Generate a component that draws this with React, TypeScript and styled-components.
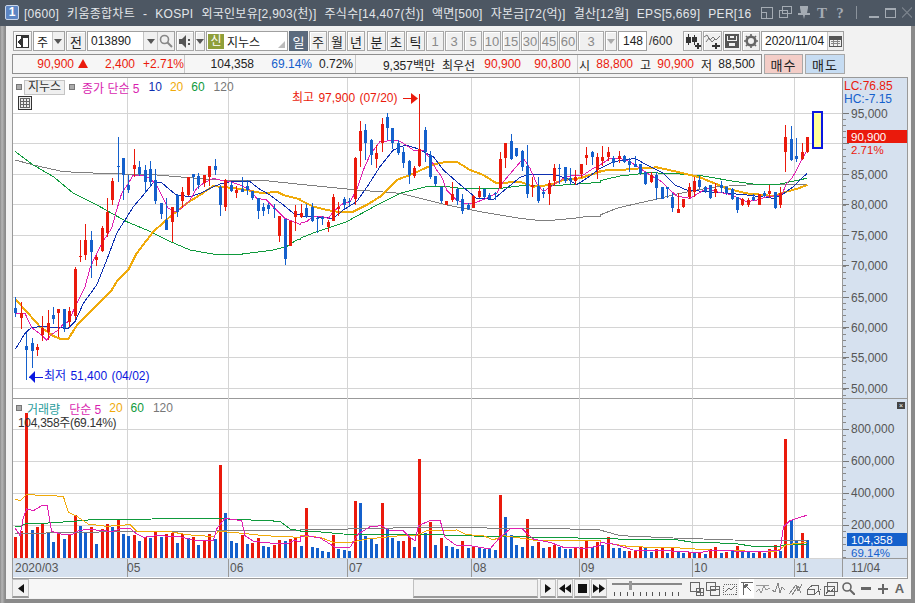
import styled, { createGlobalStyle } from "styled-components";

const FONT = `"Liberation Sans", "Noto Sans CJK KR", sans-serif`;
const RED = "#ea1a0c";
const BLUE = "#1460cc";
const AXIS_BG = "#d6e1ef";

const GlobalStyle = createGlobalStyle`
  html, body { margin: 0; padding: 0; background: #8f8f8f; }
  * { box-sizing: border-box; }
  body { font: 12px ${FONT}; color: #222; }
`;

// candles are read off in px of the enlarged crops: colour, high, top, bottom, low
type Candle = [string, number, number, number, number];
const C_A: Candle[] = [
  ["b",590,625,640,652],["r",605,640,655,687],["b",700,738,750,840],["b",715,730,752,803],["r",733,740,750,768],
  ["r",648,683,706,722],["r",630,670,695,720],["b",620,645,657,672],["r",628,628,640,712],["b",628,628,685,697],
  ["r",622,633,665,680],["r",500,507,648,658],["r",420,467,471,485],["r",372,420,465,480],["b",392,420,456,533],
  ["r",465,470,480,497],["r",378,384,452,455],["r",295,335,400,410],["r",235,243,300,315],["b",110,198,201,245],
  ["b",174,174,224,300],["b",225,255,270,280],["r",148,195,207,230],["b",183,200,222,228],["b",195,210,245,280],
  ["b",183,207,246,260],["b",207,240,303,312],["b",310,310,342,357],["b",295,360,390,390],["r",320,320,366,425],
  ["b",283,285,335,352],["r",262,277,303,325],["r",230,232,285,287],["b",222,222,230,272],["b",220,228,256,267],
  ["r",225,225,248,262],["r",198,198,232,258],["b",177,198,210,225],["b",255,262,316,348],["r",238,240,320,332],
  ["b",245,255,273,275],["r",258,270,278,293],["b",232,267,275,276],["b",240,258,270,285],["b",272,272,295,300],
  ["b",295,295,332,356],["b",308,321,332,348],["b",310,314,327,342],["b",312,323,328,355],["r",347,347,407,425],
  ["b",357,357,477,495],["r",362,364,437,437],["r",315,333,350,392],
];
const C_B: Candle[] = [
  ["r",342,370,382,385],["b",342,355,380,385],["b",340,352,392,395],["b",378,385,387,428],["b",377,380,386,405],
  ["r",390,395,412,425],["r",312,322,392,392],["r",335,352,357,378],["b",320,327,345,358],["b",325,333,337,352],
  ["r",200,204,328,345],["r",93,123,183,230],["b",102,120,160,210],["b",148,150,195,225],["r",165,189,208,235],
  ["r",85,101,158,186],["b",70,82,113,150],["b",113,114,160,177],["b",150,160,190,195],["b",170,187,220,235],
  ["b",210,212,255,282],["r",228,233,257,263],["r",12,177,227,230],["b",112,120,185,215],["b",183,195,262,268],
  ["b",258,258,282,288],["b",292,292,332,338],["r",332,332,345,345],["r",275,313,330,335],["b",295,297,332,345],
  ["b",312,327,362,372],["b",340,345,357,360],["r",315,318,355,355],["r",288,302,322,325],["b",296,296,322,325],
  ["b",310,315,327,328],["b",305,308,312,330],["r",187,207,295,298],["r",158,160,205,233],["b",132,153,208,210],
  ["b",175,175,198,200],["b",180,183,230,243],["b",165,228,312,325],["r",260,285,290,320],["b",262,288,333,340],
  ["b",295,305,312,325],["r",270,280,312,345],["r",222,235,272,288],["b",222,235,237,282],["b",232,232,272,278],
  ["b",235,265,272,285],["r",240,262,272,285],["r",222,222,252,265],["r",170,195,205,225],["b",182,185,200,225],
  ["r",190,200,240,268],
  ["r",168,202,212,228],["r",170,185,200,212],["b",198,203,218,230],["r",183,197,208,218],["b",195,197,215,218],
  ["b",205,213,226,245],["b",197,222,230,230],["b",222,222,250,255],["b",245,245,282,285],["r",245,255,277,280],
  ["b",245,255,295,330],["b",290,290,327,328],["b",290,290,298,325],["b",310,320,355,365],["r",310,358,368,370],
  ["r",328,328,352,355],["r",278,290,320,328],["r",262,273,305,320],["b",258,270,290,298],["b",288,290,303,308],
  ["b",285,285,325,328],["r",280,297,310,320],["b",272,285,295,310],["b",290,290,310,315],["b",295,297,328,330],
  ["b",320,320,360,368],["r",323,327,345,348],["r",325,330,345,350],["b",312,322,330,332],["r",312,312,345,345],
  ["b",302,308,317,320],["r",285,302,312,325],["b",305,307,355,358],["r",292,308,345,355],["r",105,140,187,245],
  ["b",108,147,210,212],["b",145,198,207,215],["r",160,185,207,210],["r",142,142,185,190],
];
const candles = [
  ...C_A.map(c => ({ c: c[0], v: c.slice(1).map(n => 100 + (n as number) / 3) })),
  ...C_B.map(c => ({ c: c[0], v: c.slice(1).map(n => 90 + (n as number) / 3) })),
];

const VOL = "r428 r412 r58 b408 r399 r389 b417 b444 r420 b435 r420 r363 b396 b417 r399 b450 r405 r390 b399 r378 b420 b426 r423 b441 r429 b432 r411 b430 r420 r417 b447 r420 b432 r429 b453 r440 r420 b435 r213 b357 b441 b447 r423 b450 r447 r432 b456 b459 r453 r438 b441 r435 r432 b456 r342 b459 b462 b471 b474 r423 b465 b468 b471 r321 b327 b426 b435 b450 r327 b405 b432 b441 r441 r429 b459 r195 b417 r384 b453 r432 b456 b459 b465 r441 b462 r456 b459 b465 b462 b468 r303 b369 b423 b453 b459 r375 b456 r444 b462 r459 r453 b459 b465 b465 r462 r459 r438 b459 r444 b453 r429 b462 b462 b471 r471 r468 r459 b462 b474 r465 r462 b477 r462 b474 b477 r474 b477 r474 b480 r465 r459 b477 r474 b471 r456 b471 b474 b477 r474 b477 r465 r453 b471 r135 b378 b441 r417 b438"
  .split(" ")
  .map(s => ({ c: s[0], top: 395 + Number(s.slice(1)) / 3 }));

const barX = (i: number) => Math.round(15.4 + 5.385 * i);
const tint = (c: string) => (c === "r" ? RED : BLUE);

const toPts = (d: number[], ox: number, oy: number) => {
  const out: string[] = [];
  for (let i = 0; i < d.length; i += 2) out.push(`${ox + d[i] / 3},${oy + d[i + 1] / 3}`);
  return out.join(" ");
};
const priceLine = (a: number[], b: number[], c: number[]) =>
  [toPts(a, 0, 100), toPts(b, 300, 90), toPts(c, 600, 90)].join(" ");
const volLine = (a: number[], b: number[], c: number[]) =>
  [toPts(a, 0, 395), toPts(b, 300, 395), toPts(c, 600, 395)].join(" ");

const PRICE_LINES = [
  { color: "#7f7f7f", w: 1, pts: priceLine(
    [46,180,100,195,190,215,300,220,470,225,590,235,660,240,780,240,900,253],
    [0,283,70,290,170,300,300,310,440,345,540,365,660,385,730,393,820,385,870,378,900,380],
    [0,375,50,355,100,343,180,325,230,312,290,300,350,290,440,285,622,283]) },
  { color: "#0f9a3c", w: 1, pts: priceLine(
    [46,155,100,195,160,230,220,280,300,320,380,365,440,390,500,420,570,450,655,465,720,463,820,450,860,440,890,420,900,418],
    [0,445,50,425,140,395,240,340,300,310,380,290,440,290,500,297,600,295,680,285,790,285,900,277],
    [0,272,60,258,150,248,240,252,310,258,390,272,460,282,540,282,620,265]) },
  { color: "#f0aa0a", w: 2, pts: priceLine(
    [46,598,80,635,120,680,160,708,180,716,205,716,235,670,280,625,335,570,350,545,385,510,410,460,460,395,510,350,560,310,600,285,640,258,680,262,730,268,790,280,830,275,850,285,900,298],
    [0,330,40,350,80,360,110,365,160,365,200,345,240,320,290,270,330,255,390,228,420,218,470,215,510,240,550,255,590,280,660,275,700,290,750,285,790,270,840,265,900,245],
    [0,242,60,240,120,235,170,232,230,245,300,262,380,295,440,310,520,318,560,305,595,295,622,285]) },
  { color: "#0d2fb0", w: 1, pts: priceLine(
    [46,748,60,725,75,700,95,682,130,680,160,682,205,685,225,665,250,610,290,555,320,480,350,400,375,360,400,320,430,285,460,248,485,248,510,270,530,285,570,290,600,280,630,265,660,252,690,245,750,245,775,265,810,285,850,315,880,340,900,345],
    [0,380,40,380,100,385,130,360,170,335,205,285,240,230,280,180,315,165,350,175,400,200,430,240,470,275,500,300,530,325,580,328,620,295,660,262,690,253,760,253,800,265,830,285,860,265,900,235],
    [0,235,40,215,105,205,140,225,190,250,225,285,260,300,320,305,385,310,440,315,520,325,545,315,580,290,605,265,622,250]) },
  { color: "#e01fb0", w: 1, pts: priceLine(
    [46,640,75,640,95,683,125,705,140,720,155,703,175,690,190,672,205,665,222,628,240,590,255,560,270,505,285,470,305,430,335,385,350,330,365,280,385,250,400,225,430,225,450,235,470,255,490,295,505,325,525,335,545,325,570,300,590,265,610,250,640,235,660,240,690,245,720,255,750,270,770,295,800,300,815,315,835,335,855,355,900,373],
    [0,400,20,395,40,378,60,378,85,385,100,365,130,340,150,335,170,300,190,240,210,195,240,155,290,150,310,160,340,180,370,180,390,205,410,240,425,260,440,300,470,330,490,340,520,340,560,325,590,310,610,275,640,240,670,205,690,235,710,280,730,305,760,285,790,265,820,255,850,255,880,235,900,225],
    [0,225,30,205,60,205,90,215,120,235,150,255,185,275,210,300,230,318,270,325,295,310,320,295,350,305,385,312,410,322,440,335,470,330,500,320,545,315,560,280,575,265,590,240,605,210,622,180]) },
];

const VOL_LINES = [
  { color: "#7f7f7f", pts: volLine(
    [46,420,200,415,400,413,640,413,660,408,900,408],
    [0,408,240,403,360,400,560,402,720,402,900,408],
    [0,408,60,425,220,432,400,438,622,440]) },
  { color: "#0f9a3c", pts: volLine(
    [46,397,60,397,80,388,130,388,220,382,265,378,520,374,660,374,800,380,840,382,870,405,900,410],
    [0,412,50,413,130,420,240,422,400,422,580,428,640,427,700,430,900,433],
    [0,433,80,436,220,436,280,445,400,448,460,457,540,457,560,450,622,450]) },
  { color: "#f0aa0a", pts: volLine(
    [46,316,60,320,80,302,150,305,190,307,205,355,235,370,265,390,320,397,390,392,410,412,505,412,560,422,640,428,655,412,730,418,790,425,900,430],
    [0,425,60,430,100,445,150,445,200,435,300,425,350,425,380,410,470,408,500,422,550,425,580,438,610,425,680,435,710,440,900,440],
    [0,445,90,458,240,462,330,468,470,472,530,472,560,452,622,445]) },
  { color: "#e01fb0", pts: volLine(
    [46,403,60,425,70,370,80,345,100,350,125,335,142,335,150,385,155,412,190,422,220,420,235,410,270,405,300,410,340,412,365,402,390,403,410,420,430,430,470,425,540,428,580,438,640,440,650,405,675,373,725,380,735,425,760,442,810,447,860,450,880,440,900,442],
    [0,428,20,425,60,432,90,450,105,460,150,460,175,420,210,398,245,395,265,408,310,410,330,430,345,440,355,395,390,380,420,378,435,430,470,455,510,455,570,465,600,430,630,405,665,403,700,435,750,445,790,460,860,463,900,455],
    [0,445,40,450,100,468,200,470,300,476,330,470,470,472,540,470,550,400,570,380,620,364]) },
];

const GRID_X = [127, 228, 347, 471, 579, 692, 794];
const PRICE_Y = [113, 143, 174, 204, 235, 265, 297, 327, 357, 388];
const PRICE_LABELS = ["95,000","90,000","85,000","80,000","75,000","70,000","65,000","60,000","55,000","50,000"];
const VOL_Y = [430, 462, 494, 526];
const VOL_LABELS = ["800,000","600,000","400,000","200,000"];
const DATES: [string, number][] = [["2020/03",15],["05",127],["06",230],["07",349],["08",473],["09",581],["10",694],["11",796]];

const Shell = styled.div`
  width: 915px;
  height: 603px;
  display: flex;
  flex-direction: column;
  overflow: hidden;
  background: linear-gradient(90deg, #8a8a8a 0, #b5b5b5 2px, #8a8a8a 5px);
`;

const TitleBar = styled.div`
  height: 26px;
  background: #4d5763;
  display: flex;
  align-items: center;
  padding: 0 8px 1px 5px;
  flex: none;
`;

const AppBadge = styled.div`
  width: 14px;
  height: 15px;
  border-radius: 2px;
  background: #5d86c4;
  border: 1px solid #c9d6ea;
  color: #fff;
  font: bold 12px/13px ${FONT};
  text-align: center;
  flex: none;
`;

const TitleText = styled.div`
  width: 731px;
  margin-left: 5px;
  color: #e3e6ea;
  font-size: 12px;
  letter-spacing: 0.28px;
  word-spacing: 4.4px;
  white-space: pre;
  flex: none;
`;

const TitleIcons = styled.div`
  display: flex;
  align-items: center;
  gap: 6px;
  margin-left: 6px;
  color: #a4abb3;
`;

const TitleSep = styled.div`
  width: 1px;
  height: 13px;
  background: #8b939c;
  margin: 0 6px 0 4px;
`;

const TitleLetter = styled.span`
  font: bold 15px/14px "Liberation Serif", serif;
  width: 12px;
  text-align: center;
`;

const Inner = styled.div`
  flex: 1;
  margin: 0 4px 4px 6px;
  padding: 5px 3px 0 6px;
  background: #f2f2f2;
  display: flex;
  flex-direction: column;
  min-height: 0;
`;

const ToolRow = styled.div`
  height: 20px;
  display: flex;
  align-items: stretch;
  gap: 1px;
  padding-left: 1px;
  flex: none;
`;

const Btn = styled.div<{ $w: number; $on?: boolean; $off?: boolean; $ml?: number }>`
  width: ${p => p.$w}px;
  margin-left: ${p => p.$ml ?? 0}px;
  flex: none;
  display: flex;
  align-items: center;
  justify-content: center;
  font-size: 13px;
  border: 1px solid ${p => (p.$on ? "#5a6878" : "#a8a8a8")};
  background: ${p => (p.$on ? "#5c6b7e" : "#f0f0f0")};
  color: ${p => (p.$on ? "#fff" : p.$off ? "#8a8a8a" : "#222")};
  box-shadow: ${p => (p.$on ? "none" : "inset 1px 1px 0 #fff")};
`;

const Arrow = styled.div<{ $off?: boolean }>`
  width: 0;
  height: 0;
  border-left: 4px solid transparent;
  border-right: 4px solid transparent;
  border-top: 5px solid ${p => (p.$off ? "#aaa" : "#555")};
`;

const Field = styled.div<{ $w: number; $ml?: number }>`
  width: ${p => p.$w}px;
  margin-left: ${p => p.$ml ?? 0}px;
  flex: none;
  display: flex;
  align-items: center;
  background: #fff;
  border: 1px solid #a0a0a0;
  font-size: 12px;
  position: relative;
`;

const FieldText = styled.span<{ $w?: number; $right?: boolean }>`
  width: ${p => (p.$w ? `${p.$w}px` : "auto")};
  padding: 0 3px;
  text-align: ${p => (p.$right ? "right" : "left")};
  white-space: nowrap;
`;

const FieldBtn = styled.div<{ $w: number }>`
  width: ${p => p.$w}px;
  align-self: stretch;
  background: #f0f0f0;
  border-left: 1px solid #c4c4c4;
  display: flex;
  align-items: center;
  justify-content: center;
  color: #666;
`;

const NewBadge = styled.span`
  width: 16px;
  height: 15px;
  margin: 0 3px 0 1px;
  background: #8f9f3a;
  color: #fff;
  font-size: 12px;
  line-height: 14px;
  text-align: center;
  flex: none;
`;

const Corner = styled.span`
  position: absolute;
  right: 2px;
  bottom: 2px;
  width: 0;
  height: 0;
  border-left: 7px solid transparent;
  border-bottom: 7px solid #bbb;
`;

const PlainLabel = styled.span<{ $w: number }>`
  width: ${p => p.$w}px;
  align-self: center;
  padding-left: 1px;
  font-size: 12px;
  color: #333;
  flex: none;
`;

const InfoRow = styled(ToolRow)`
  margin-top: 3px;
  gap: 0;
  padding-left: 0;
`;

const InfoBox = styled.div`
  width: 750px;
  display: flex;
  border: 1px solid #8f8f8f;
  background: #f6f6f6;
  flex: none;
`;

const InfoSeg = styled.div<{ $w: number }>`
  width: ${p => p.$w}px;
  display: flex;
  align-items: center;
  border-right: 1px solid #c8c8c8;
  flex: none;
  &:last-child { border-right: 0; }
`;

const Cell = styled.span<{ $w: number; $c?: string }>`
  width: ${p => p.$w}px;
  text-align: right;
  white-space: nowrap;
  color: ${p => p.$c ?? "#222"};
  flex: none;
`;

const UpMark = styled.i`
  display: inline-block;
  width: 0;
  height: 0;
  margin-left: 4px;
  border-left: 5px solid transparent;
  border-right: 5px solid transparent;
  border-bottom: 9px solid ${RED};
`;

const TradeBtn = styled.div<{ $bg: string; $ml: number; $w: number }>`
  width: ${p => p.$w}px;
  margin-left: ${p => p.$ml}px;
  background: ${p => p.$bg};
  border: 1px solid #a8a8a8;
  display: flex;
  align-items: center;
  justify-content: center;
  letter-spacing: 1px;
  font-size: 13px;
  flex: none;
`;

const ChartFrame = styled.div`
  margin-top: 3px;
  height: 502px;
  width: 896px;
  border: 1px solid #999;
  display: grid;
  grid-template-columns: 829px 65px;
  grid-template-rows: 321px 160px 18px;
  gap: 0;
  background: #fff;
  flex: none;
`;

const Panel = styled.div<{ $rule?: boolean }>`
  position: relative;
  background: #fff;
  border-bottom: ${p => (p.$rule ? "1px solid #999" : "0")};
`;

const DatePanel = styled.div`
  position: relative;
  background: ${AXIS_BG};
`;

const AxisPanel = styled.div<{ $rule?: boolean }>`
  position: relative;
  background: ${AXIS_BG};
  border-left: 1px solid #999;
  border-bottom: ${p => (p.$rule ? "1px solid #999" : "0")};
`;

const Draw = styled.svg`
  display: block;
  position: absolute;
  inset: 0;
  font: 12px ${FONT};
`;

const TagText = styled.text`
  font-size: 11.5px;
`;

const MarkText = styled.text`
  word-spacing: 1px;
`;

const Legend = styled.div`
  position: absolute;
  left: 3px;
  top: 1px;
  height: 16px;
  display: flex;
  align-items: center;
  white-space: nowrap;
`;

const Square = styled.i<{ $ml?: number }>`
  width: 6px;
  height: 6px;
  margin-left: ${p => p.$ml ?? 0}px;
  background: #ababab;
  border: 1px solid #777;
  flex: none;
`;

const NameChip = styled.span`
  width: 41px;
  height: 15px;
  margin-left: 2px;
  background: #efefef;
  border: 1px solid #c4c4c4;
  text-align: center;
  line-height: 13px;
  color: #333;
  flex: none;
`;

const LegendItem = styled.span<{ $c: string; $ml: number }>`
  color: ${p => p.$c};
  margin-left: ${p => p.$ml}px;
`;

const GridBtn = styled.div`
  position: absolute;
  left: 5px;
  top: 18px;
  width: 14px;
  height: 14px;
  background: #eee;
  border: 1px solid #333;
  display: flex;
  align-items: center;
  justify-content: center;
`;

const VolumeNote = styled.div`
  position: absolute;
  left: 5px;
  top: 14px;
  color: #333;
  letter-spacing: -0.3px;
  white-space: nowrap;
`;

const CloseMini = styled.div`
  position: absolute;
  right: 2px;
  top: 3px;
  width: 8px;
  height: 7px;
  background: #444;
  color: #fff;
  font-size: 7px;
  line-height: 7px;
  text-align: center;
`;

const BottomRow = styled.div`
  height: 19px;
  width: 896px;
  display: flex;
  align-items: stretch;
  flex: none;
`;

const NavBtn = styled.div<{ $w?: number; $ml?: number }>`
  width: ${p => p.$w ?? 16}px;
  margin-left: ${p => p.$ml ?? 0}px;
  background: #f2f2f2;
  border: 1px solid #c0c0c0;
  border-bottom: 2px solid #999;
  display: flex;
  align-items: center;
  justify-content: center;
  flex: none;
`;

const DotTrack = styled.div`
  width: 384px;
  flex: none;
  background-color: #f7f7f7;
  background-image: radial-gradient(#e2e2e2 0.5px, transparent 0.6px);
  background-size: 2px 2px;
`;

const SliderWrap = styled.div`
  width: 81px;
  flex: none;
  display: flex;
  align-items: center;
  padding-left: 5px;
`;

const IconStrip = styled.div`
  display: flex;
  align-items: center;
  flex: none;
  color: #666;
`;

const IconCell = styled.div<{ $w: number; $on?: boolean }>`
  width: ${p => p.$w}px;
  align-self: stretch;
  display: flex;
  align-items: center;
  justify-content: center;
  background: ${p => (p.$on ? "#fff" : "transparent")};
`;

const BigA = styled.span`
  font: bold 13px ${FONT};
  color: #666;
`;

const Ico = ({ s = 12, h, children }: { s?: number; h?: number; children: React.ReactNode }) => (
  <svg width={s} height={h ?? s} viewBox={`0 0 ${s} ${h ?? s}`} fill="none" stroke="currentColor" shapeRendering="crispEdges">
    {children}
  </svg>
);

const PriceChart = () => (
  <Draw width={829} height={321} viewBox="13 78 829 321">
    {PRICE_Y.map(y => <line key={y} x1={13} x2={842} y1={y + 0.5} y2={y + 0.5} stroke="#d4d4d4" shapeRendering="crispEdges" />)}
    {GRID_X.map(x => <line key={x} x1={x + 0.5} x2={x + 0.5} y1={78} y2={399} stroke="#d4d4d4" shapeRendering="crispEdges" />)}
    {PRICE_LINES.map(l => (
      <polyline key={l.color} points={l.pts} fill="none" stroke={l.color} strokeWidth={l.w} shapeRendering="crispEdges" />
    ))}
    <g shapeRendering="crispEdges">
      {candles.map((k, i) => {
        const x = barX(i);
        const [hi, top, bot, lo] = k.v;
        return (
          <g key={i} fill={tint(k.c)}>
            <rect x={x} y={hi} width={1} height={lo - hi} />
            <rect x={x - 1} y={top} width={3} height={Math.max(bot - top, 1)} />
          </g>
        );
      })}
      <rect x={812.5} y={111.5} width={9} height={36.5} fill="#ffff99" stroke="#0a18e0" strokeWidth={2} />
      <rect x={403} y={98} width={11} height={1} fill={RED} />
      <rect x={29} y={377} width={14} height={1} fill="#0a18e0" />
    </g>
    <polygon points="411,93 411,104 418,98.5" fill={RED} />
    <polygon points="35,371 35,383 29,377" fill="#0a18e0" />
    <MarkText x={292} y={102} fill={RED}>최고 97,900 (07/20)</MarkText>
    <MarkText x={44} y={380} fill="#0a18e0">최저 51,400 (04/02)</MarkText>
  </Draw>
);

const PriceAxis = () => (
  <Draw width={64} height={321} viewBox="843 78 64 321">
    {Array.from({ length: 48 }, (_, i) => 112.6 + i * 6.14).map(y => (
      <line key={y} x1={843} x2={846} y1={Math.round(y) + 0.5} y2={Math.round(y) + 0.5} stroke="#888" shapeRendering="crispEdges" />
    ))}
    {PRICE_Y.map((y, i) => (
      <g key={y}>
        <line x1={843} x2={849} y1={y + 0.5} y2={y + 0.5} stroke="#777" shapeRendering="crispEdges" />
        {i !== 1 && <text x={851} y={y + 4.5} fill="#555">{PRICE_LABELS[i]}</text>}
      </g>
    ))}
    <text x={844} y={90} fill={RED}>LC:76.85</text>
    <text x={844} y={103} fill={BLUE}>HC:-7.15</text>
    <rect x={847} y={130} width={60} height={13} fill={RED} shapeRendering="crispEdges" />
    <TagText x={851} y={140.5} fill="#fff">90,900</TagText>
    <TagText x={851} y={154} fill={RED}>2.71%</TagText>
  </Draw>
);

const VolumeChart = () => (
  <Draw width={829} height={160} viewBox="13 400 829 160">
    {VOL_Y.map(y => <line key={y} x1={13} x2={842} y1={y + 0.5} y2={y + 0.5} stroke="#d4d4d4" shapeRendering="crispEdges" />)}
    <line x1={13} x2={842} y1={559.5} y2={559.5} stroke="#d4d4d4" shapeRendering="crispEdges" />
    {GRID_X.map(x => <line key={x} x1={x + 0.5} x2={x + 0.5} y1={400} y2={560} stroke="#d4d4d4" shapeRendering="crispEdges" />)}
    <g shapeRendering="crispEdges">
      {VOL.map((b, i) => (
        <rect key={i} x={barX(i) - 1} y={b.top} width={3} height={558.8 - b.top} fill={tint(b.c)} />
      ))}
    </g>
    {VOL_LINES.map(l => (
      <polyline key={l.color} points={l.pts} fill="none" stroke={l.color} shapeRendering="crispEdges" />
    ))}
  </Draw>
);

const VolumeAxis = () => (
  <Draw width={64} height={160} viewBox="843 400 64 160">
    {Array.from({ length: 26 }, (_, i) => 404 + i * 6.4).map(y => (
      <line key={y} x1={843} x2={846} y1={Math.round(y) + 0.5} y2={Math.round(y) + 0.5} stroke="#888" shapeRendering="crispEdges" />
    ))}
    {VOL_Y.map((y, i) => (
      <g key={y}>
        <line x1={843} x2={849} y1={y + 0.5} y2={y + 0.5} stroke="#777" shapeRendering="crispEdges" />
        <text x={851} y={y + 4} fill="#555">{VOL_LABELS[i]}</text>
      </g>
    ))}
    <rect x={847} y={534} width={60} height={13} fill={BLUE} shapeRendering="crispEdges" />
    <TagText x={851} y={544.5} fill="#fff">104,358</TagText>
    <TagText x={851} y={558} fill={BLUE}>69.14%</TagText>
  </Draw>
);

const DateAxis = () => (
  <Draw width={829} height={18} viewBox="13 561 829 18">
    {GRID_X.map(x => <line key={x} x1={x + 0.5} x2={x + 0.5} y1={561} y2={579} stroke="#999" shapeRendering="crispEdges" />)}
    {DATES.map(([t, x]) => <text key={t} x={x} y={574} fill="#555">{t}</text>)}
  </Draw>
);

const LayoutIcon = () => (
  <svg width={13} height={13} viewBox="0 0 13 13" shapeRendering="crispEdges">
    <rect x={0.5} y={0.5} width={12} height={12} fill="#fff" stroke="#333" />
    <rect x={5} y={1} width={7} height={2} fill="#333" />
    <rect x={5} y={3} width={2} height={9} fill="#333" />
    <polygon points="1,7 5,4 5,10" fill="#333" />
  </svg>
);

const SearchIcon = () => (
  <svg width={14} height={14} viewBox="0 0 14 14" fill="none" stroke="#888" strokeWidth={1.6}>
    <circle cx={5.5} cy={5.5} r={4} />
    <path d="M8.5 8.5 13 13" strokeWidth={2} />
  </svg>
);

const SpeakerIcon = () => (
  <svg width={13} height={13} viewBox="0 0 13 13">
    <polygon points="0,4 3,4 7,0 7,13 3,9 0,9" fill="#555" />
    <rect x={9} y={4} width={2} height={2} fill="#555" />
    <rect x={9} y={8} width={2} height={2} fill="#555" />
  </svg>
);

const CandleAddIcon = () => (
  <svg width={16} height={15} viewBox="0 0 16 15" shapeRendering="crispEdges" fill="#333">
    <rect x={3} y={0} width={1} height={11} /><rect x={1} y={3} width={5} height={6} />
    <rect x={9} y={1} width={1} height={10} /><rect x={7} y={3} width={5} height={5} />
    <rect x={10} y={11} width={6} height={2} /><rect x={12} y={9} width={2} height={6} />
  </svg>
);

const LineAddIcon = () => (
  <svg width={17} height={15} viewBox="0 0 17 15" fill="none">
    <path d="M0 3 3 1 6 6 9 3 12 6 16 2M2 8 5 4 8 8 11 5" stroke="#777" />
    <path d="M11 9h2v2h3v2h-3v2h-2v-2H8v-2h3z" fill="#333" />
  </svg>
);

const SaveIcon = () => (
  <svg width={14} height={14} viewBox="0 0 14 14" fill="none" stroke="#555" strokeWidth={1.4} shapeRendering="crispEdges">
    <rect x={1} y={1} width={12} height={12} />
    <rect x={4} y={1} width={6} height={4} />
    <rect x={3} y={8} width={8} height={5} />
  </svg>
);

const GearIcon = () => (
  <svg width={14} height={14} viewBox="0 0 14 14">
    <circle cx={7} cy={7} r={4.3} fill="none" stroke="#666" strokeWidth={2.6} />
    <path d="M7 0v14M0 7h14M2 2l10 10M12 2 2 12" stroke="#666" strokeWidth={1.6} strokeDasharray="2.4 9.2 2.4 0" />
  </svg>
);

const CalendarIcon = () => (
  <svg width={13} height={13} viewBox="0 0 13 13" fill="none" stroke="#555" shapeRendering="crispEdges">
    <rect x={0.5} y={1.5} width={12} height={10} />
    <rect x={1} y={2} width={11} height={2} fill="#555" />
    <path d="M2 6.5h9M2 8.5h9M4.5 5v6M8.5 5v6" stroke="#888" />
  </svg>
);

const TinyGrid = () => (
  <svg width={10} height={10} viewBox="0 0 10 10" fill="none" stroke="#666" shapeRendering="crispEdges">
    <path d="M0.5 .5h9v9h-9zM.5 3.5h9M.5 6.5h9M3.5 .5v9M6.5 .5v9" />
  </svg>
);

const Tri = ({ d }: { d: "l" | "r" }) => (
  <svg width={6} height={9} viewBox="0 0 6 9">
    <polygon points={d === "l" ? "6,0 6,9 0,4.5" : "0,0 0,9 6,4.5"} fill="#111" />
  </svg>
);

const SliderDraw = () => (
  <svg width={70} height={19} viewBox="0 0 70 19" shapeRendering="crispEdges">
    <rect x={0} y={4} width={70} height={2} fill="#888" />
    <rect x={17} y={2} width={3} height={9} fill="#999" />
    {Array.from({ length: 11 }, (_, i) => (
      <rect key={i} x={2 + i * 6.4} y={13} width={1} height={4} fill="#555" />
    ))}
  </svg>
);

const TitleGlyphs = () => (
  <TitleIcons>
    <Ico><path d="M.5 .5h11v11H.5zM.5 5.5h5v6" strokeWidth={1.4} /></Ico>
    <Ico s={13}><path d="M3.5 .5h9v7h-9zM.5 4.5h8v7h-8z" strokeWidth={1.2} /></Ico>
    <svg width={12} height={13} viewBox="0 0 12 13" fill="currentColor">
      <path d="M2 0h8v2L9 7h3v2H7l-1 4-1-4H0V7h3L2 2z" />
    </svg>
    <TitleLetter>T</TitleLetter>
    <TitleLetter>?</TitleLetter>
    <TitleSep />
    <Ico s={10} h={12}><path d="M0 10h10" strokeWidth={2} /></Ico>
    <Ico s={11}><path d="M.5 1.5h10v9H.5z" strokeWidth={1.2} /><path d="M.5 1.5h10" strokeWidth={2} /></Ico>
    <svg width={10} height={11} viewBox="0 0 10 11" stroke="#7d858e" strokeWidth={1.2}><path d="M0 .5l10 10M10 .5 0 10.5" /></svg>
  </TitleIcons>
);

const BottomIcons = () => (
  <IconStrip>
    <IconCell $w={17}><Ico s={14}><path d="M.5 .5h9v9h-9zM6.5 6.5h7v7h-7zM10 6.5v7M6.5 10h7" /></Ico></IconCell>
    <IconCell $w={16}><Ico s={14}><path d="M.5 .5h9v8h-9zM4.5 4.5h9v9h-9zM4.5 7.5h9" /></Ico></IconCell>
    <IconCell $w={18}><Ico s={14}><path d="M.5 2.5h13v10H.5z" strokeDasharray="1 1" /><path d="M2 10l4-4 2 2 4-4" /></Ico></IconCell>
    <IconCell $w={15} $on><Ico s={13}><path d="M.5 .5h12M3.5 .5v12M5 3l6 6M5 3h3M5 3v3" strokeWidth={1.2} /></Ico></IconCell>
    <IconCell $w={17}><Ico s={14} h={12}><path d="M0 2.5h13M0 9l3-3 2 4 3-7 2 4 4-2" stroke="#999" /></Ico></IconCell>
    <IconCell $w={16}><Ico s={14} h={13}><path d="M0 8l3 2 3-9 2 10 2-6 3 3" stroke="#888" /></Ico></IconCell>
    <IconCell $w={18}><Ico s={14}><path d="M0 12 7 3l2 6 4-7M3 13 9 4l3 7" stroke="#888" /></Ico></IconCell>
    <IconCell $w={17}><Ico s={14}><path d="M.5 7.5 5 3.5h6v6l-4 3H.5zM.5 7.5h7v5M11 9h1v4M13 7h1v6" /></Ico></IconCell>
    <IconCell $w={18}><Ico s={14}><path d="M3.5 .5h10v9h-10zM.5 4.5h10v9H.5zM2 12l3-4 2 2 3-4" /></Ico></IconCell>
    <IconCell $w={17}>
      <svg width={13} height={13} viewBox="0 0 13 13" fill="none" stroke="#666" strokeWidth={1.6}><circle cx={5} cy={5} r={4} /><path d="M8 8 13 13" strokeWidth={2} /></svg>
    </IconCell>
    <IconCell $w={17}><svg width={10} height={3} viewBox="0 0 10 3"><rect width={10} height={3} fill="#666" /></svg></IconCell>
    <IconCell $w={17}><svg width={10} height={10} viewBox="0 0 10 10"><path d="M4 0h2v4h4v2H6v4H4V6H0V4h4z" fill="#666" /></svg></IconCell>
    <IconCell $w={17}><BigA>A</BigA></IconCell>
  </IconStrip>
);

export default function App() {
  return (
    <Shell>
      <GlobalStyle />
      <TitleBar>
        <AppBadge>1</AppBadge>
        <TitleText>[0600] 키움종합차트 - KOSPI 외국인보유[2,903(천)] 주식수[14,407(천)] 액면[500] 자본금[72(억)] 결산[12월] EPS[5,669] PER[16</TitleText>
        <TitleGlyphs />
      </TitleBar>
      <Inner>
        <ToolRow>
          <Btn $w={19}><LayoutIcon /></Btn>
          <Field $w={32}>
            <FieldText $w={19}>주</FieldText>
            <FieldBtn $w={13}><Arrow /></FieldBtn>
          </Field>
          <Btn $w={20}>전</Btn>
          <Field $w={88}>
            <FieldText $w={56}>013890</FieldText>
            <FieldBtn $w={15}><Arrow /></FieldBtn>
            <FieldBtn $w={17}><SearchIcon /></FieldBtn>
          </Field>
          <Btn $w={18}><SpeakerIcon /></Btn>
          <Btn $w={10}><Arrow /></Btn>
          <Field $w={82}>
            <NewBadge>신</NewBadge>
            <span>지누스</span>
            <Corner />
          </Field>
          <Btn $w={19} $on>일</Btn>
          <Btn $w={18}>주</Btn>
          <Btn $w={18}>월</Btn>
          <Btn $w={18}>년</Btn>
          <Btn $w={19} $ml={1}>분</Btn>
          <Btn $w={18}>초</Btn>
          <Btn $w={19}>틱</Btn>
          {["1", "3", "5", "10", "15", "30", "45", "60"].map(n => (
            <Btn key={n} $w={18} $off>{n}</Btn>
          ))}
          <Btn $w={26} $off>3</Btn>
          <Btn $w={12} $off><Arrow $off /></Btn>
          <Field $w={29}>
            <FieldText $w={28} $right>148</FieldText>
          </Field>
          <PlainLabel $w={34}>/600</PlainLabel>
          <Btn $w={19}><CandleAddIcon /></Btn>
          <Btn $w={19}><LineAddIcon /></Btn>
          <Btn $w={18}><SaveIcon /></Btn>
          <Btn $w={18}><GearIcon /></Btn>
          <Field $w={83}>
            <FieldText $w={65}>2020/11/04</FieldText>
            <FieldBtn $w={17}><CalendarIcon /></FieldBtn>
          </Field>
        </ToolRow>

        <InfoRow>
          <InfoBox>
            <InfoSeg $w={172}>
              <Cell $w={75} $c={RED}>90,900<UpMark /></Cell>
              <Cell $w={47} $c={RED}>2,400</Cell>
              <Cell $w={49} $c={RED}>+2.71%</Cell>
            </InfoSeg>
            <InfoSeg $w={171}>
              <Cell $w={69}>104,358</Cell>
              <Cell $w={58} $c={BLUE}>69.14%</Cell>
              <Cell $w={41}>0.72%</Cell>
            </InfoSeg>
            <InfoSeg $w={222}>
              <Cell $w={79}>9,357백만</Cell>
              <Cell $w={40}>최우선</Cell>
              <Cell $w={46} $c={RED}>90,900</Cell>
              <Cell $w={50} $c={RED}>90,800</Cell>
            </InfoSeg>
            <InfoSeg $w={183}>
              <Cell $w={12}>시</Cell>
              <Cell $w={43} $c={RED}>88,800</Cell>
              <Cell $w={18}>고</Cell>
              <Cell $w={43} $c={RED}>90,900</Cell>
              <Cell $w={18}>저</Cell>
              <Cell $w={43}>88,500</Cell>
            </InfoSeg>
          </InfoBox>
          <TradeBtn $bg="#f3cdc7" $ml={2} $w={39}>매수</TradeBtn>
          <TradeBtn $bg="#c6dcf2" $ml={2} $w={40}>매도</TradeBtn>
        </InfoRow>

        <ChartFrame>
          <Panel $rule>
            <PriceChart />
            <Legend>
              <Square />
              <NameChip>지누스</NameChip>
              <Square $ml={4} />
              <LegendItem $c="#d91fb0" $ml={7}>종가 단순 5</LegendItem>
              <LegendItem $c="#0d2fb0" $ml={9}>10</LegendItem>
              <LegendItem $c="#f0aa0a" $ml={8}>20</LegendItem>
              <LegendItem $c="#0f9a3c" $ml={8}>60</LegendItem>
              <LegendItem $c="#777" $ml={9}>120</LegendItem>
            </Legend>
            <GridBtn><TinyGrid /></GridBtn>
          </Panel>
          <AxisPanel $rule><PriceAxis /></AxisPanel>
          <Panel $rule>
            <VolumeChart />
            <Legend>
              <Square />
              <LegendItem $c="#2a9d9d" $ml={5}>거래량</LegendItem>
              <LegendItem $c="#d91fb0" $ml={9}>단순 5</LegendItem>
              <LegendItem $c="#f0aa0a" $ml={8}>20</LegendItem>
              <LegendItem $c="#0f9a3c" $ml={8}>60</LegendItem>
              <LegendItem $c="#777" $ml={9}>120</LegendItem>
            </Legend>
            <VolumeNote>104,358주(69.14%)</VolumeNote>
          </Panel>
          <AxisPanel $rule>
            <VolumeAxis />
            <CloseMini>×</CloseMini>
          </AxisPanel>
          <DatePanel>
            <DateAxis />
          </DatePanel>
          <AxisPanel>
            <Draw width={64} height={18} viewBox="0 0 64 18">
              <text x={8} y={13} fill="#555">11/04</text>
            </Draw>
          </AxisPanel>
        </ChartFrame>

        <BottomRow>
          <NavBtn $w={17}><Tri d="l" /></NavBtn>
          <DotTrack />
          <NavBtn $w={125} />
          <NavBtn $ml={2}><Tri d="r" /></NavBtn>
          <NavBtn $ml={1}><Tri d="l" /><Tri d="l" /></NavBtn>
          <NavBtn $ml={1}><svg width={9} height={9}><rect width={9} height={9} fill="#111" /></svg></NavBtn>
          <NavBtn $ml={1}><Tri d="r" /><Tri d="r" /></NavBtn>
          <SliderWrap><SliderDraw /></SliderWrap>
          <BottomIcons />
        </BottomRow>
      </Inner>
    </Shell>
  );
}
